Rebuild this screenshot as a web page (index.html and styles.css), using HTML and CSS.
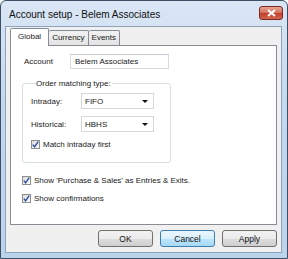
FILE: index.html
```html
<!DOCTYPE html>
<html lang="en">
<head>
  <meta charset="UTF-8">
  <title>Account setup - Belem Associates</title>
  <link rel="stylesheet" href="styles.css">
</head>
<body>
  <div class="window">
    <div class="titlebar">
      <span class="title">Account setup - Belem Associates</span>
      <button class="close-btn" aria-label="Close">
        <svg width="9" height="8" viewBox="0 0 9 8"><path d="M1 1 L8 7 M8 1 L1 7" stroke="#fff" stroke-width="2"/></svg>
      </button>
    </div>

    <div class="client">
      <div class="tabs">
        <div class="tab active">Global</div>
        <div class="tab">Currency</div>
        <div class="tab">Events</div>
      </div>

      <div class="panel">
        <div class="account-row">
          <label class="account-label">Account</label>
          <div class="textbox">Belem Associates</div>
        </div>

        <fieldset class="group">
          <legend>Order matching type:</legend>
          <div class="field-row">
            <label>Intraday:</label>
            <div class="combo"><span>FIFO</span><i class="arrow"></i></div>
          </div>
          <div class="field-row">
            <label>Historical:</label>
            <div class="combo"><span>HBHS</span><i class="arrow"></i></div>
          </div>
          <div class="check">
            <span class="box"><svg width="7" height="7" viewBox="0 0 7 7"><path d="M0.8 3.6 L2.6 5.8 L6.2 0.6" fill="none" stroke="#2e4e9e" stroke-width="1.4"/></svg></span>
            Match intraday first
          </div>
        </fieldset>

        <div class="check outer">
          <span class="box"><svg width="7" height="7" viewBox="0 0 7 7"><path d="M0.8 3.6 L2.6 5.8 L6.2 0.6" fill="none" stroke="#2e4e9e" stroke-width="1.4"/></svg></span>
          Show 'Purchase &amp; Sales' as Entries &amp; Exits.
        </div>
        <div class="check outer">
          <span class="box"><svg width="7" height="7" viewBox="0 0 7 7"><path d="M0.8 3.6 L2.6 5.8 L6.2 0.6" fill="none" stroke="#2e4e9e" stroke-width="1.4"/></svg></span>
          Show confirmations
        </div>
      </div>

      <div class="buttons">
        <button class="btn">OK</button>
        <button class="btn default">Cancel</button>
        <button class="btn">Apply</button>
      </div>
    </div>
  </div>
</body>
</html>
```

FILE: styles.css
```css
body {
  margin: 0;
  font-family: "Liberation Sans", Arial, sans-serif;
  font-size: 8px;
  color: #1a1a1a;
  background: #fff;
}
.window {
  width: 288px;
  height: 259px;
  box-sizing: border-box;
  border: 1px solid #3d4f66;
  border-radius: 6px 6px 0 0;
  background: linear-gradient(#dae6f4, #c4d8ee 40%, #bcd3ec);
  padding: 0 5px 5px 4px;
  display: flex;
  flex-direction: column;
}
.titlebar {
  height: 25px;
  display: flex;
  align-items: center;
  justify-content: space-between;
  padding-left: 4px;
}
.title {
  font-size: 10px;
  color: #111;
  margin-top: 2px;
}
.close-btn {
  width: 24px;
  height: 14px;
  margin-top: -1px;
  margin-right: -1px;
  padding: 0;
  border: 1px solid #7a2a22;
  border-radius: 3px;
  background: linear-gradient(#e8a493, #d47560 45%, #c0402c 55%, #d0664f);
  display: flex;
  align-items: center;
  justify-content: center;
}
.client {
  flex: 1;
  background: #f0f0f0;
  border: 1px solid #8ea3bd;
  padding: 1px 4px 4px 4px;
  display: flex;
  flex-direction: column;
}
.tabs {
  display: flex;
  align-items: flex-end;
  height: 17px;
  font-size: 8px;
}
.tab {
  height: 14px;
  line-height: 14px;
  padding: 0 3px;
  border: 1px solid #898c95;
  border-bottom: none;
  border-left: none;
  background: linear-gradient(#f2f2f2, #e3e3e3);
  border-radius: 2px 2px 0 0;
}
.tab:first-child {
  border-left: 1px solid #898c95;
}
.tab.active {
  height: 17px;
  line-height: 16px;
  padding: 0 7px;
  background: #fff;
  border-left: 1px solid #898c95;
  margin-bottom: -1px;
  position: relative;
  z-index: 1;
}
.panel {
  height: 180px;
  box-sizing: border-box;
  background: #fff;
  border: 1px solid #898c95;
  padding: 8px 0 0 11px;
}
.account-row {
  display: flex;
  align-items: center;
  padding-left: 2px;
}
.account-label {
  width: 46px;
}
.textbox {
  width: 99px;
  height: 15px;
  box-sizing: border-box;
  border: 1px solid #d5dbe2;
  border-top-color: #c4cad2;
  padding: 0 4px;
  line-height: 13px;
}
.group {
  width: 149px;
  height: 84px;
  box-sizing: border-box;
  margin: 10px 0 0 0;
  padding: 5px 0 0 8px;
  border: 1px solid #d5dfe5;
  border-radius: 3px;
}
.group legend {
  padding: 0 1px;
  margin-left: 4px;
}
.field-row {
  display: flex;
  align-items: center;
  margin-bottom: 7px;
}
.field-row label {
  width: 50px;
}
.combo {
  width: 73px;
  height: 16px;
  box-sizing: border-box;
  border: 1px solid #d3d8de;
  display: flex;
  align-items: center;
  justify-content: space-between;
  padding: 0 5px 0 3px;
}
.arrow {
  width: 0;
  height: 0;
  border-left: 3px solid transparent;
  border-right: 3px solid transparent;
  border-top: 3px solid #111;
}
.check {
  display: flex;
  align-items: center;
  gap: 3px;
  height: 10px;
}
.box {
  width: 9px;
  height: 9px;
  box-sizing: border-box;
  border: 1px solid #8e8f8f;
  background: linear-gradient(135deg, #dcdcdc, #fbfbfb);
  display: flex;
  align-items: center;
  justify-content: center;
}
.check.outer {
  margin-top: 8px;
}
.group + .check.outer {
  margin-top: 12px;
}
.buttons {
  display: flex;
  justify-content: flex-end;
  gap: 7px;
  margin-top: 5px;
}
.btn {
  width: 55px;
  height: 17px;
  padding: 0;
  font-family: inherit;
  font-size: 8.5px;
  color: #111;
  border: 1px solid #707070;
  border-radius: 3px;
  background: linear-gradient(#f2f2f2, #ebebeb 50%, #dddddd 51%, #cfcfcf);
}
.btn.default {
  border-color: #3c7fb1;
  background: linear-gradient(#eaf6fd, #d9f0fc 50%, #bee6fd 51%, #a7d9f5);
}
```
